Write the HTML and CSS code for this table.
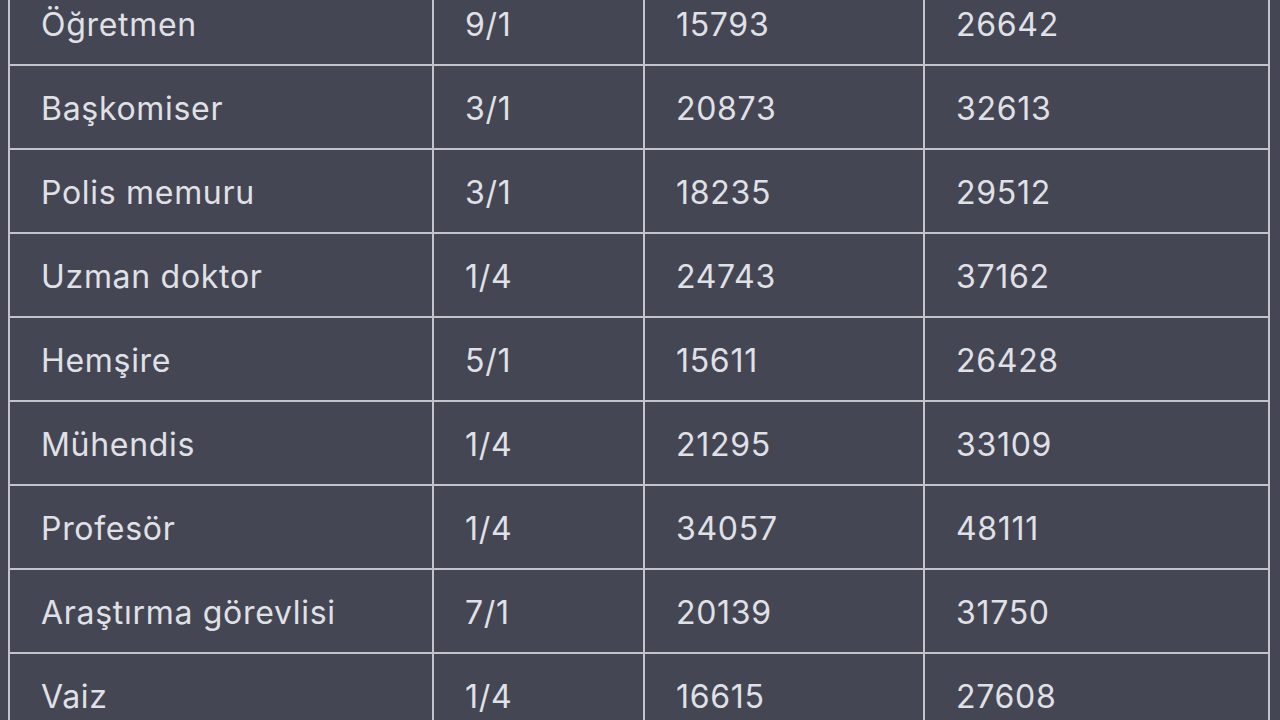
FILE: index.html
```html
<!DOCTYPE html>
<html lang="tr">
<head>
<meta charset="utf-8">
<title>Tablo</title>
<link rel="stylesheet" href="styles.css">
</head>
<body>
<table class="grid">
  <colgroup>
    <col class="c1"><col class="c2"><col class="c3"><col class="c4">
  </colgroup>
  <tbody>
    <tr><td>Öğretmen</td><td>9/1</td><td>15793</td><td>26642</td></tr>
    <tr><td>Başkomiser</td><td>3/1</td><td>20873</td><td>32613</td></tr>
    <tr><td>Polis memuru</td><td>3/1</td><td>18235</td><td>29512</td></tr>
    <tr><td>Uzman doktor</td><td>1/4</td><td>24743</td><td>37162</td></tr>
    <tr><td>Hemşire</td><td>5/1</td><td>15611</td><td>26428</td></tr>
    <tr><td>Mühendis</td><td>1/4</td><td>21295</td><td>33109</td></tr>
    <tr><td>Profesör</td><td>1/4</td><td>34057</td><td>48111</td></tr>
    <tr><td>Araştırma görevlisi</td><td>7/1</td><td>20139</td><td>31750</td></tr>
    <tr><td>Vaiz</td><td>1/4</td><td>16615</td><td>27608</td></tr>
  </tbody>
</table>
</body>
</html>
```
FILE: styles.css
```css
html, body {
  margin: 0;
  padding: 0;
  background: #444654;
  overflow: hidden;
}
body {
  height: 720px;
}
.grid {
  margin: -20px 0 0 8px;
  width: 1262px;
  table-layout: fixed;
  border-collapse: separate;
  border-spacing: 2px;
  background: #c3c4cb;
  font-family: Inter, "Noto Sans", sans-serif;
  font-size: 32px;
  color: #e0e1e6;
}
.c1 { width: 422px; }
.c2 { width: 209px; }
.c3 { width: 278px; }
.c4 { width: 343px; }
.grid td {
  background: #444654;
  height: 82px;
  padding: 2px 0 0 31px;
  box-sizing: border-box;
  vertical-align: middle;
  white-space: nowrap;
  letter-spacing: 0.7px;
}
```
